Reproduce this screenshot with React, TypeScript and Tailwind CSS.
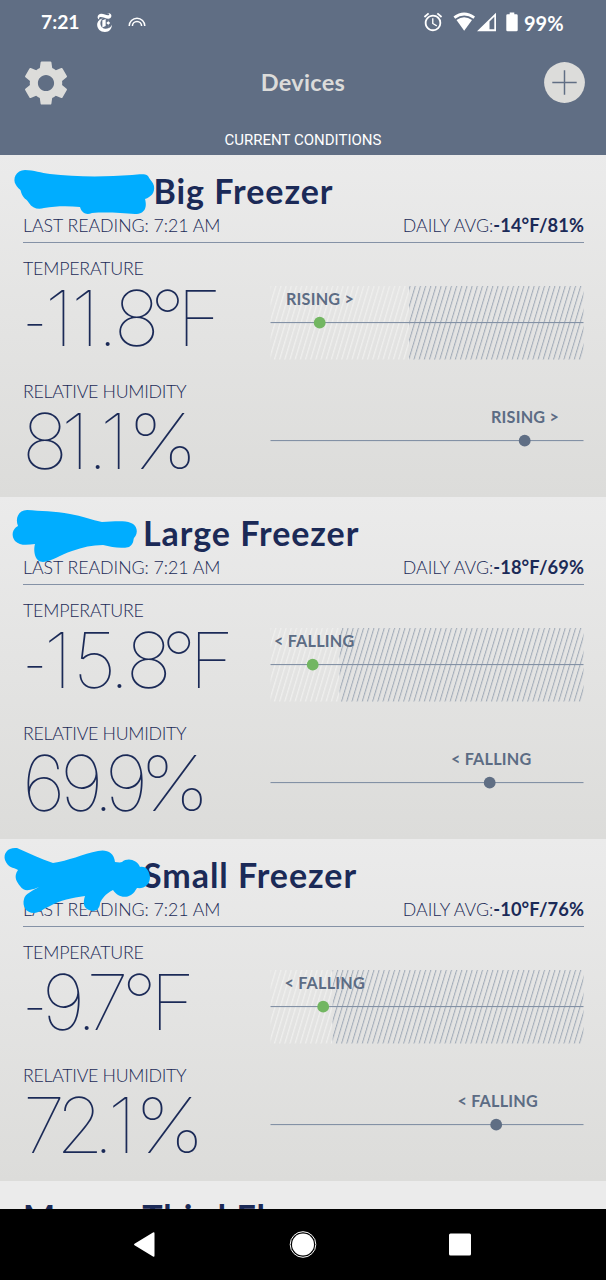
import React from "react";
import { MdSettings, MdAccessAlarm } from "react-icons/md";
import { SiNewyorktimes } from "react-icons/si";

type Trend = { dir: "RISING" | "FALLING"; dot: number; label: number };
// A large value is a list of glyph runs, each with the kerning in front of it.
type Glyphs = [string, number][];
type Device = {
  name: string;
  nameClass: string;
  avg: string;
  temp: Glyphs;
  humidity: Glyphs;
  tempTrend: Trend;
  humidityTrend: Trend;
  limit: number;
  scribble: React.ReactNode;
};

const BLUE = "#00adff";

const devices: Device[] = [
  {
    name: "Big Freezer",
    nameClass: "pl-[130.5px]",
    avg: "-14°F/81%",
    temp: [["-", 0], ["11.", -10], ["8", -2.5], ["°", -7.5], ["F", -6]],
    humidity: [["8", -1], ["1.", -5], ["1", -6], ["%", 4]],
    tempTrend: { dir: "RISING", dot: 49, label: 16 },
    humidityTrend: { dir: "RISING", dot: 254, label: 221 },
    limit: 139,
    scribble: (
      <path d="M25 15C16 15 12 24 16 30C18 34 21 34 21 37C23 44 27 44 29 48C32 53 38 55 44 53C56 51 68 51 80 52C82 59 87 60 92 58C106 57 122 58 135 59C146 59 147 51 145 44C151 42 155 38 154 31C153 27 150 25 148 21C144 18 138 20 132 20C105 22 75 22 50 19C41 18 34 15 25 15Z" />
    ),
  },
  {
    name: "Large Freezer",
    nameClass: "pl-[120px]",
    avg: "-18°F/69%",
    temp: [["-", 0], ["1", -11], ["5", 3], [".", -5.5], ["8", -2], ["°", -8.5], ["F", -5]],
    humidity: [["6", -1], ["9", -3.5], [".", -8.5], ["9", -7], ["%", -4]],
    tempTrend: { dir: "FALLING", dot: 42, label: 4 },
    humidityTrend: { dir: "FALLING", dot: 219, label: 181 },
    limit: 69.5,
    scribble: (
      <path d="M27 13C18 13 15 22 18 29C12 32 11 39 15 44C20 49 27 48 35 47C33 54 35 65 43 65C52 64 60 58 72 54C83 50 92 48 103 48C112 50 120 52 129 50C134 47 133 43 134 41C139 36 137 28 131 26C123 23 112 25 102 25C92 23 82 19 70 17C55 14 40 14 27 13Z" />
    ),
  },
  {
    name: "Small Freezer",
    nameClass: "pl-[120px]",
    avg: "-10°F/76%",
    temp: [["-", 0], ["9", -13], [".", -7], ["7", -8.5], ["°", -5], ["F", -4.5]],
    humidity: [["7", 0], ["2", -7], [".", -9], ["1", -4], ["%", 3]],
    tempTrend: { dir: "FALLING", dot: 52.5, label: 14.5 },
    humidityTrend: { dir: "FALLING", dot: 225.5, label: 187.5 },
    limit: 62.5,
    scribble: (
      <path d="M17 9C8 8 3 14 5 21C8 29 13 28 18 31C13 38 17 43 20 47C24 53 29 51 34 50L39 48C32 52 25 55 24 60C22 67 26 74 34 74C39 74 43 70 50 67C60 61 72 59 85 57C83 63 83 69 89 71C96 74 100 69 100 64C102 60 105 55 113 51C117 57 124 60 131 56C134 54 135 52 137 49C144 50 150 46 150 38C149 30 145 27 140 28C137 21 128 18 122 23C120 24 117 23 115 23C114 13 106 10 98 12C83 15 68 22 53 24C41 20 29 14 17 9Z" />
    ),
  },
];

function TrendChart({ trend, limit, color, id }: { trend: Trend; limit?: number; color: string; id: string }) {
  return (
    <div className="relative h-[76px] w-[314px]">
      <svg width="314" height="76" className="block">
        <defs>
          <pattern id={id + "w"} width="5.17" height="80" patternUnits="userSpaceOnUse" patternTransform="translate(0 1) skewX(-16.7)">
            <rect width="1.3" height="80" fill="#efefee" />
          </pattern>
          <pattern id={id + "b"} width="5.17" height="80" patternUnits="userSpaceOnUse" patternTransform="translate(0 1) skewX(-16.7)">
            <rect width="1.1" height="80" fill="#a3adb9" />
          </pattern>
        </defs>
        {limit !== undefined && (
          <>
            <rect x="0.5" y="1" width={limit} height="73.5" fill={`url(#${id}w)`} />
            <rect x={limit} y="1" width={313.5 - limit} height="73.5" fill={`url(#${id}b)`} />
          </>
        )}
        <rect x="0.5" y="37" width="313" height="1.1" fill="#8391a5" />
        <circle cx={trend.dot + 0.7} cy="37.7" r="5.9" fill={color} />
      </svg>
      <span
        className="absolute top-[4px] text-[16.2px] leading-[20px] font-bold tracking-[0.2px] whitespace-pre text-[#5c6c84]"
        style={{ left: trend.label }}
      >
        {trend.dir === "RISING" ? "RISING >" : "< FALLING"}
      </span>
    </div>
  );
}

const glyphShape: Record<string, string> = {
  "-": "inline-block origin-left translate-y-[3px] scale-x-[0.7]",
  "%": "inline-block scale-x-[1.08]",
};

function BigValue({ glyphs }: { glyphs: Glyphs }) {
  return (
    <div className="font-['Inter'] text-[77px] leading-[79px] font-thin tracking-[-2px] whitespace-nowrap">
      {glyphs.map(([run, kern], i) => (
        <span key={i} className={glyphShape[run]} style={{ marginLeft: kern }}>
          {run}
        </span>
      ))}
    </div>
  );
}

function Reading({
  label,
  labelClass,
  value,
  children,
}: {
  label: string;
  labelClass: string;
  value: Glyphs;
  children: React.ReactNode;
}) {
  return (
    <div className="flex h-[123px] justify-between">
      <div className="flex flex-col">
        <div className={`text-[17.8px] leading-[22px] font-light whitespace-nowrap ${labelClass}`}>{label}</div>
        <BigValue glyphs={value} />
      </div>
      {children}
    </div>
  );
}

function DeviceCard({ d, i }: { d: Device; i: number }) {
  return (
    <section className="relative h-[342px] shrink-0 bg-linear-to-b from-[#ebebeb] to-[#dcdcda] pr-[22px] pl-[23px] text-[#1b2a57]">
      <h2 className={`pt-[16px] text-[34px] leading-[40px] font-bold tracking-[0.95px] whitespace-nowrap ${d.nameClass}`}>{d.name}</h2>
      <div className="flex h-[32px] justify-between border-b border-[#8592a6] pt-[3px] text-[17.8px] leading-[22px]">
        <span className="font-light tracking-[-0.05px]">LAST READING: 7:21 AM</span>
        <span className="font-light">
          DAILY AVG:<b className="text-[18.3px] font-bold tracking-[0.1px]">{d.avg}</b>
        </span>
      </div>
      <div className="pt-[14px]">
        <Reading label="TEMPERATURE" labelClass="tracking-[-0.2px]" value={d.temp}>
          <div className="pt-[28px]">
            <TrendChart trend={d.tempTrend} limit={d.limit} color="#72b661" id={`t${i}`} />
          </div>
        </Reading>
        <Reading label="RELATIVE HUMIDITY" labelClass="tracking-[-0.3px]" value={d.humidity}>
          <div className="pt-[23px]">
            <TrendChart trend={d.humidityTrend} color="#5f6e84" id={`h${i}`} />
          </div>
        </Reading>
      </div>
      <svg width="160" height="80" className="absolute top-0 left-0" fill={BLUE}>
        {d.scribble}
      </svg>
    </section>
  );
}

export default function App() {
  return (
    <div className="flex h-[1280px] w-[606px] flex-col overflow-hidden bg-black font-['Lato',sans-serif]">
      <header className="flex h-[155px] shrink-0 flex-col bg-[#606e84]">
        <div className="flex h-[44px] items-center text-white">
          <span className="ml-[41px] w-[54px] pt-px text-[19.3px] font-bold">7:21</span>
          <SiNewyorktimes size={19} />
          <svg width="18" height="12" viewBox="0 0 18 12" className="ml-[14px]" fill="none" stroke="white" strokeWidth="1.5">
            <path d="M1.2 10A7.8 7.8 0 0 1 16.8 10M4.4 10A4.6 4.6 0 0 1 13.6 10" />
          </svg>
          <MdAccessAlarm size={22} className="ml-[276px]" />
          <svg width="44" height="20" viewBox="0 0 44 20" className="ml-[9px]" fill="white">
            <path d="M0.5 4.5Q11 -3.5 22 4.5L20.5 6.7Q11 0.5 2.2 6.7Z" />
            <path d="M3.5 8Q11 2.5 19 8L11.2 18.8Z" />
            <path fillRule="evenodd" d="M24 19.2L43 0.8V19.2ZM36.5 9.5V17.2H41.3V4.8Z" />
          </svg>
          <svg width="12" height="20" viewBox="0 0 12 20" className="ml-[9px]" fill="white">
            <path d="M3.7 0.4H8.3V2.3H10.4Q11.7 2.3 11.7 3.6V18Q11.7 19.3 10.4 19.3H1.6Q0.3 19.3 0.3 18V3.6Q0.3 2.3 1.6 2.3H3.7Z" />
          </svg>
          <span className="ml-[6px] pt-px text-[20px] font-bold">99%</span>
        </div>
        <div className="flex h-[77px] items-center justify-between pr-[21px] pl-[19px]">
          <MdSettings size={54} color="#dcdcda" />
          <h1 className="mr-[11px] pt-px text-[23.5px] font-bold tracking-[0.3px] text-[#dcdcda]">Devices</h1>
          <svg width="41" height="41" viewBox="0 0 42 42">
            <circle cx="21" cy="21" r="20.9" fill="#dcdcda" />
            <path d="M21 8.5V33.5M8.5 21H33.5" stroke="#606e84" strokeWidth="1.5" />
          </svg>
        </div>
        <div className="mt-[9px] text-center font-['Roboto'] text-[15px] leading-[20px] text-white">CURRENT CONDITIONS</div>
      </header>
      <main className="flex h-[1054px] shrink-0 flex-col overflow-hidden">
        {devices.map((d, i) => (
          <DeviceCard key={d.name} d={d} i={i} />
        ))}
        <section className="h-[28px] shrink-0 overflow-hidden bg-[#ebebeb] pt-[16px] pl-[23px]">
          <h2 className="text-[34px] leading-[40px] font-bold tracking-[1.1px] whitespace-nowrap text-[#1b2a57]">Moven Third Floor</h2>
        </section>
      </main>
      <nav className="flex h-[71px] shrink-0 items-center bg-black">
        <svg width="606" height="71" viewBox="0 0 606 71" fill="white">
          <path d="M153 23.5Q154.5 22.5 154.5 24.5V46.5Q154.5 48.5 153 47.5L134.5 36.3Q133.5 35.5 134.5 34.7Z" />
          <circle cx="303" cy="35.5" r="11" />
          <circle cx="303" cy="35.5" r="12.8" fill="none" stroke="white" strokeWidth="1" />
          <rect x="449" y="24.5" width="22" height="22" rx="1.5" />
        </svg>
      </nav>
    </div>
  );
}
